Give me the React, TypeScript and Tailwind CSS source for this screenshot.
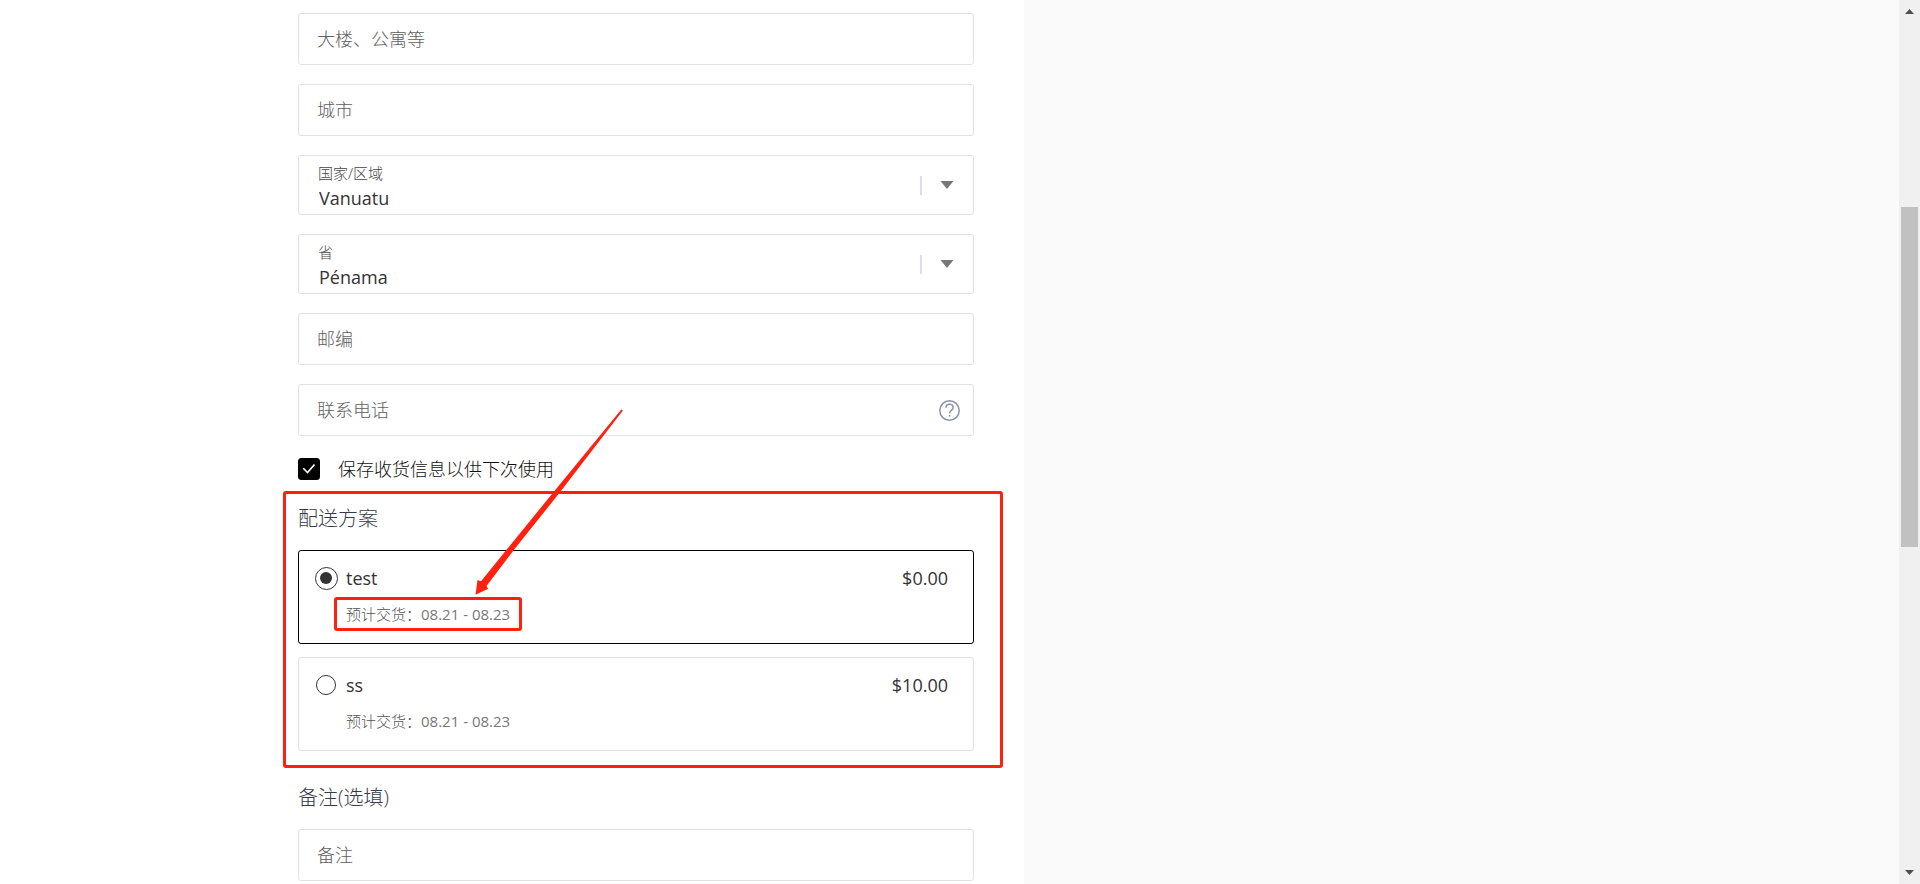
import { useState } from "react";

const shippingPlans = [
  { id: "test", name: "test", price: 0, delivery: "08.21 - 08.23" },
  { id: "ss", name: "ss", price: 10, delivery: "08.21 - 08.23" },
];

const fieldClass =
  "block w-full h-[52px] px-[18px] border border-[#e2e2e2] rounded-[3px] bg-white text-lg font-light text-[#333] placeholder:text-[#606060] outline-none focus:border-black";

function TextField({ label, type = "text" }: { label: string; type?: string }) {
  return <input type={type} aria-label={label} placeholder={label} className={fieldClass} />;
}

function SelectField({
  id,
  label,
  options,
}: {
  id: string;
  label: string;
  options: string[];
}) {
  return (
    <div className="relative">
      <label
        htmlFor={id}
        className="absolute left-5 top-[7px] text-[15px] leading-[22px] font-light text-[#444]"
      >
        {label}
      </label>

      <select
        id={id}
        className="block w-full h-[60px] pl-5 pr-16 pt-7 pb-0.5 appearance-none border border-[#e2e2e2] rounded-[3px] bg-white text-lg leading-7 text-[#333] outline-none focus:border-black"
      >
        {options.map((option) => (
          <option key={option}>{option}</option>
        ))}
      </select>

      <div className="absolute inset-y-0 right-5 flex items-center gap-[18px] pointer-events-none">
        <span className="w-0.5 h-[19px] bg-[#dcdfe4]" />
        <svg width="14" height="8" viewBox="0 0 14 8" fill="#777">
          <path d="M0.5 0h13L7 8z" />
        </svg>
      </div>
    </div>
  );
}

function ShippingCard({
  plan,
  selected,
  highlighted,
  onSelect,
}: {
  plan: (typeof shippingPlans)[number];
  selected: boolean;
  highlighted: boolean;
  onSelect: () => void;
}) {
  return (
    <label
      className={`block h-[94px] pt-[13px] pl-[15px] pr-[25px] border rounded-[3px] cursor-pointer ${
        selected ? "border-black" : "border-[#e2e2e2]"
      }`}
    >
      <span className="flex items-center text-lg leading-7 text-[#333]">
        <span className="flex w-6 justify-center mr-2">
          <input
            type="radio"
            name="shipping"
            checked={selected}
            onChange={onSelect}
            className="flex items-center justify-center size-5 checked:size-[23px] appearance-none rounded-full border border-[#333] checked:before:size-3 checked:before:rounded-full checked:before:bg-[#333]"
          />
        </span>
        <span className="flex-1">{plan.name}</span>
        <span>${plan.price.toFixed(2)}</span>
      </span>

      <span className="relative inline-block ml-8 mt-[11px] text-[15px] leading-[22px] font-light text-[#555]">
        预计交货：<span className="font-normal text-[#777]">{plan.delivery}</span>
        {highlighted && (
          <span className="absolute -inset-x-3 -inset-y-1.5 border-3 border-[#ff2010] rounded-[3px]" />
        )}
      </span>
    </label>
  );
}

function ScrollBar() {
  return (
    <div className="sticky top-0 flex flex-col items-center w-[21px] h-screen py-[9px] bg-[#f0f0f0]">
      <svg width="9" height="5" viewBox="0 0 9 5" fill="#505050">
        <path d="M4.5 0L9 5H0z" />
      </svg>
      <div className="flex-[193]" />
      <div className="flex-[340] w-[17px] bg-[#c1c1c1]" />
      <div className="flex-[323]" />
      <svg width="9" height="5" viewBox="0 0 9 5" fill="#505050">
        <path d="M0 0h9L4.5 5z" />
      </svg>
    </div>
  );
}

export default function App() {
  const [plan, setPlan] = useState("test");
  const [saveInfo, setSaveInfo] = useState(true);

  return (
    <div className="flex min-h-screen bg-[#fafafa] font-['Open_Sans','Noto_Sans_CJK_SC',sans-serif]">
      <div className="flex-1 grid grid-cols-[1024fr_875fr]">
        <main className="bg-white pt-[13px] pb-0.5 pl-6 pr-[50px]">
          <form className="w-full max-w-[676px] ml-auto">
            <div className="flex flex-col gap-[19px]">
              <TextField label="大楼、公寓等" />
              <TextField label="城市" />
              <SelectField id="country" label="国家/区域" options={["Vanuatu"]} />
              <SelectField id="province" label="省" options={["Pénama"]} />
              <TextField label="邮编" />

              <div className="relative">
                <TextField label="联系电话" type="tel" />
                <button
                  type="button"
                  aria-label="帮助"
                  className="absolute inset-y-0 right-3.5 flex items-center"
                >
                  <svg width="21" height="21" viewBox="0 0 21 21" fill="none" stroke="#8a92a6">
                    <circle cx="10.5" cy="10.5" r="9.7" strokeWidth="1.5" />
                    <path
                      d="M6.9 7.7c0-2.2 1.6-3.5 3.7-3.5s3.6 1.3 3.6 3.2c0 2.7-3.6 2.8-3.6 6"
                      strokeWidth="1.5"
                    />
                    <path d="M10.5 15v1.7" strokeWidth="1.5" />
                  </svg>
                </button>
              </div>

              <label className="flex items-center h-7 text-lg font-light text-[#111] cursor-pointer">
                <span className="relative flex mr-[18px]">
                  <input
                    type="checkbox"
                    checked={saveInfo}
                    onChange={(e) => setSaveInfo(e.target.checked)}
                    className="size-[22px] appearance-none border border-black rounded-[3px] checked:bg-black"
                  />
                  <svg
                    className="absolute inset-0 pointer-events-none"
                    width="22"
                    height="22"
                    viewBox="0 0 22 22"
                    fill="none"
                    stroke="#fff"
                    strokeWidth="1.6"
                  >
                    <path d="M5.3 10.3l4.2 4.2 7-8" />
                  </svg>
                </span>
                保存收货信息以供下次使用
              </label>
            </div>

            <section className="relative mt-2 pt-[13px] pb-[17px]">
              <h2 className="mb-4 text-xl leading-[30px] font-light text-[#343b4a]">
                配送方案
              </h2>

              <div className="flex flex-col gap-[13px]">
                {shippingPlans.map((item, index) => (
                  <ShippingCard
                    key={item.id}
                    plan={item}
                    selected={plan === item.id}
                    highlighted={index === 0}
                    onSelect={() => setPlan(item.id)}
                  />
                ))}
              </div>

              <div className="absolute inset-y-0 -left-[15px] -right-[29px] border-3 border-[#ff2010] rounded-[3px] pointer-events-none" />

              <svg
                className="absolute left-[172px] -top-[83px] pointer-events-none"
                width="154"
                height="188"
                viewBox="0 0 154 188"
                fill="#ff2010"
              >
                <path d="M152.9 2.4L151.3 1.4L84 83.5L36.3 142L11 173.2L7.5 172L5.5 186.8L18.2 180.8L16.5 178L43.8 142L89 85.5Z" />
              </svg>
            </section>

            <h2 className="mt-[15px] mb-4 text-xl leading-[30px] font-light text-[#343b4a]">
              备注(选填)
            </h2>
            <TextField label="备注" />
          </form>
        </main>

        <aside />
      </div>

      <ScrollBar />
    </div>
  );
}
